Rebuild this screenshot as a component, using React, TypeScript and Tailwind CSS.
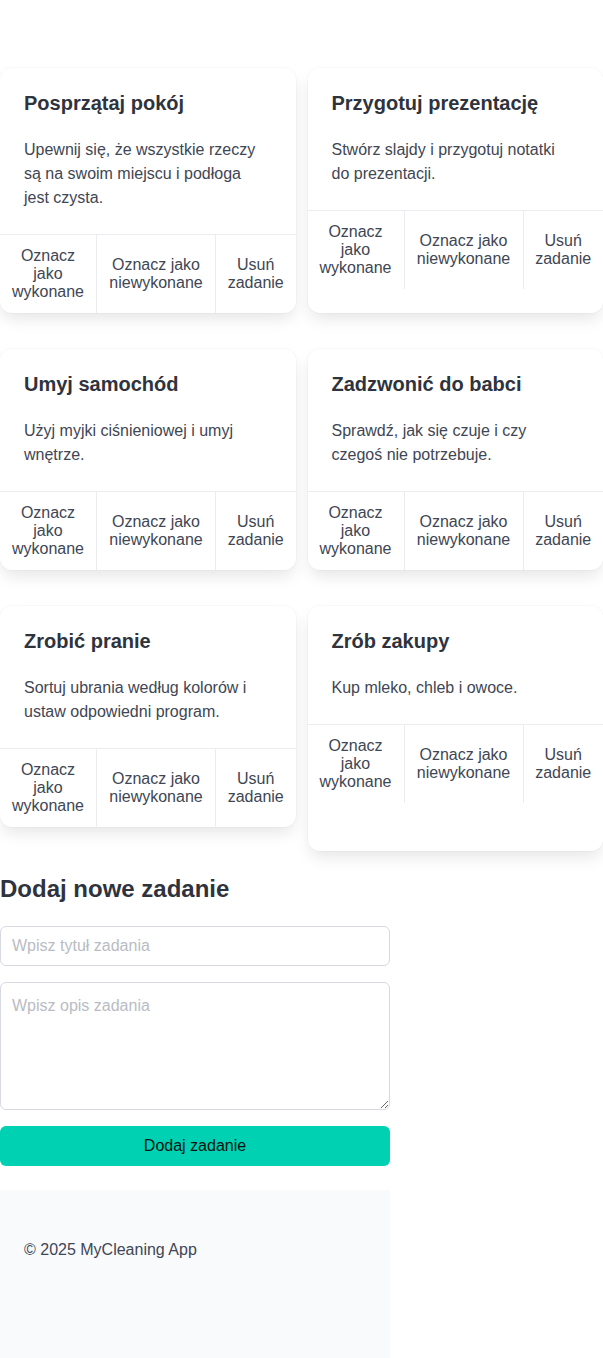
import React from "react";

type Task = { title: string; description: string };

const rows: Task[][] = [
  [
    {
      title: "Posprzątaj pokój",
      description: "Upewnij się, że wszystkie rzeczy są na swoim miejscu i podłoga jest czysta.",
    },
    {
      title: "Przygotuj prezentację",
      description: "Stwórz slajdy i przygotuj notatki do prezentacji.",
    },
  ],
  [
    {
      title: "Umyj samochód",
      description: "Użyj myjki ciśnieniowej i umyj wnętrze.",
    },
    {
      title: "Zadzwonić do babci",
      description: "Sprawdź, jak się czuje i czy czegoś nie potrzebuje.",
    },
  ],
  [
    {
      title: "Zrobić pranie",
      description: "Sortuj ubrania według kolorów i ustaw odpowiedni program.",
    },
    {
      title: "Zrób zakupy",
      description: "Kup mleko, chleb i owoce.",
    },
  ],
];

function TaskCard({ task, extraClass = "" }: { task: Task; extraClass?: string }) {
  return (
    <div
      className={`bg-white rounded-xl shadow-[0_8px_16px_-2px_rgba(10,10,10,0.1),0_0_0_1px_rgba(10,10,10,0.02)] ${extraClass}`}
    >
      <div className="pt-6 pb-6 pl-6 pr-8">
        <h3 className="text-[20px] leading-[22px] font-bold text-[#2e333d] mb-6">{task.title}</h3>
        <p className="text-base leading-6 text-[#404654]">{task.description}</p>
      </div>
      <div className="grid grid-cols-[97px_119px_1fr] border-t border-[#eaecf0]">
        <button className="py-3 px-2 text-base leading-[18px] text-[#404654] border-r border-[#eaecf0] text-center">
          Oznacz jako wykonane
        </button>
        <button className="py-3 px-2 text-base leading-[18px] text-[#404654] border-r border-[#eaecf0] text-center">
          Oznacz jako niewykonane
        </button>
        <button className="py-3 px-2 text-base leading-[18px] text-[#404654] text-center">
          Usuń zadanie
        </button>
      </div>
    </div>
  );
}

export default function App() {
  return (
    <main
      className="min-h-screen bg-white pt-[68px]"
      style={{ fontFamily: '"Liberation Sans", Arial, sans-serif' }}
    >
      <div className="flex flex-col gap-9">
        <div className="grid grid-cols-2 gap-3 items-stretch">
          <TaskCard task={rows[0][0]} />
          <TaskCard task={rows[0][1]} />
        </div>
        <div className="grid grid-cols-2 gap-3 items-stretch">
          <TaskCard task={rows[1][0]} />
          <TaskCard task={rows[1][1]} />
        </div>
        <div className="grid grid-cols-2 gap-3 items-start">
          <TaskCard task={rows[2][0]} />
          <TaskCard task={rows[2][1]} extraClass="min-h-[245px]" />
        </div>
      </div>

      <div className="w-[390px] mt-6">
        <h2 className="text-2xl leading-7 font-bold text-[#2e333d] mb-[23px]">Dodaj nowe zadanie</h2>
        <input
          type="text"
          placeholder="Wpisz tytuł zadania"
          className="block w-full h-10 px-[11px] border border-[#d6d9e0] rounded-md text-base text-[#404654] placeholder:text-[#b9bcc3] outline-none"
        />
        <textarea
          placeholder="Wpisz opis zadania"
          className="block w-full h-32 mt-4 px-[11px] py-[11px] border border-[#d6d9e0] rounded-md text-base leading-6 text-[#404654] placeholder:text-[#b9bcc3] outline-none"
        />
        <button className="block w-full h-10 mt-4 rounded-md bg-[#00d1b2] text-base text-[#001411]">
          Dodaj zadanie
        </button>
      </div>

      <footer className="w-[390px] mt-6 bg-[#f9fafb] pt-12 px-6 pb-24">
        <p className="text-base leading-6 text-[#404654]">© 2025 MyCleaning App</p>
      </footer>
    </main>
  );
}
